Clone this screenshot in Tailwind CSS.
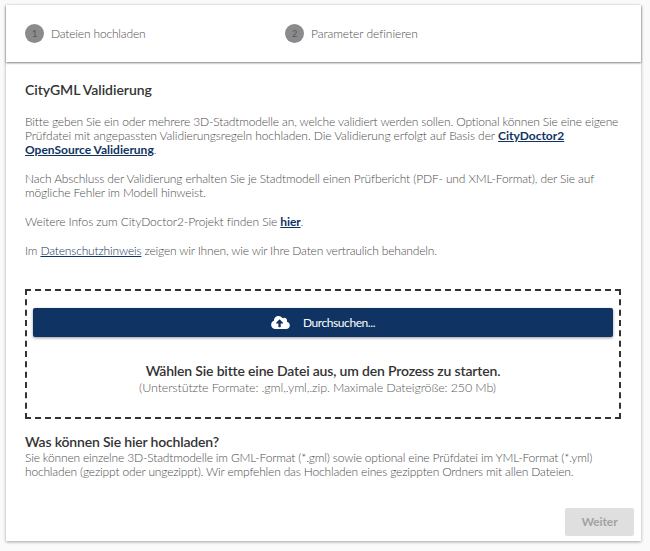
<!DOCTYPE html>
<html lang="de"><head><meta charset="utf-8"><script src="https://cdn.jsdelivr.net/npm/@tailwindcss/browser@4"></script></head>
<body class="w-[650px] h-[551px] overflow-hidden bg-[#fafafa] font-['Lato',sans-serif] font-light text-[12px] leading-[14px] text-[#4d4d4d]">
<div class="ml-[6px] mt-[5px] w-[635px] h-[536px] bg-white shadow-[0_1px_3px_rgba(0,0,0,0.35)] flex flex-col">
  <div class="h-[57px] shrink-0 flex items-center pl-[19px] shadow-[0_1px_2px_rgba(0,0,0,0.5)]">
    <div class="w-[260px] flex items-center gap-[7px]">
      <span class="w-[19px] h-[19px] rounded-full bg-[#8b8b8d] text-[#555] font-normal text-[9px] flex items-center justify-center">1</span>
      <span class="tracking-[-0.17px]">Dateien hochladen</span>
    </div>
    <div class="flex items-center gap-[7px]">
      <span class="w-[19px] h-[19px] rounded-full bg-[#8b8b8d] text-[#555] font-normal text-[9px] flex items-center justify-center">2</span>
      <span class="tracking-[-0.05px]">Parameter definieren</span>
    </div>
  </div>
  <div class="flex-1 flex flex-col pl-[19px] pr-[20px] pt-[20px]">
    <h1 class="text-[14px] leading-[16px] font-semibold text-[#333] tracking-[-0.05px]">CityGML Validierung</h1>
    <p class="mt-[17px] tracking-[-0.15px]">Bitte geben Sie ein oder mehrere 3D-Stadtmodelle an, welche validiert werden sollen. Optional können Sie eine eigene <span class="tracking-[-0.09px]">Prüfdatei mit angepassten Validierungsregeln hochladen. Die Validierung erfolgt auf Basis der</span> <a class="font-bold text-[#0f3362] underline tracking-normal">CityDoctor2 OpenSource Validierung</a>.</p>
    <p class="mt-[15px] tracking-[-0.13px]">Nach Abschluss der Validierung erhalten Sie je Stadtmodell einen Prüfbericht (PDF- und XML-Format), der Sie auf mögliche Fehler im Modell hinweist.</p>
    <p class="mt-[15px] tracking-[-0.1px]">Weitere Infos zum CityDoctor2-Projekt finden Sie <a class="font-bold text-[#0f3362] underline">hier</a>.</p>
    <p class="mt-[15px] tracking-[-0.17px]">Im <a class="font-light text-[#0f3362] underline">Datenschutzhinweis</a> zeigen wir Ihnen, wie wir Ihre Daten vertraulich behandeln.</p>
    <div class="mt-[31px] h-[130px] border-2 border-dashed border-[#333] px-[6px] pt-[17px] flex flex-col items-center">
      <button class="w-full h-[29px] bg-[#0f3362] rounded-[2px] shadow-[0_1px_3px_rgba(0,0,0,0.4)] text-white font-normal tracking-[-0.42px] flex items-center justify-center gap-[13px]">
        <svg width="19" height="15" viewBox="0 0 640 512"><path fill="#fff" d="M537.6 226.6c4.1-10.7 6.4-22.4 6.4-34.6 0-53-43-96-96-96-19.7 0-38.1 6-53.3 16.2C367 64.2 315.3 32 256 32c-88.4 0-160 71.6-160 160 0 2.7.1 5.4.2 8.1C40.2 219.800 0 273.200 0 336c0 79.500 64.500 144 144 144h368c70.700 0 128-57.300 128-128 0-61.900-44-113.600-102.400-125.400zM393.400 288H328v112c0 8.800-7.200 16-16 16h-48c-8.800 0-16-7.200-16-16V288h-65.400c-14.300 0-21.400-17.200-11.300-27.300l105.400-105.400c6.200-6.200 16.400-6.200 22.600 0l105.400 105.400c10.100 10.100 2.900 27.300-11.300 27.300z"/></svg>
        <span>Durchsuchen...</span>
      </button>
      <div class="mt-[26px] text-[14px] leading-[16px] font-semibold text-[#333] tracking-[-0.17px]">Wählen Sie bitte eine Datei aus, um den Prozess zu starten.</div>
      <div class="mt-[2px] pr-[11px] text-[#5a5a5a] text-[12.5px] tracking-[-0.14px]">(Unterstützte Formate: .gml,.yml,.zip. Maximale Dateigröße: 250 Mb)</div>
    </div>
    <h2 class="mt-[15px] text-[14px] leading-[16px] font-semibold text-[#333] tracking-[-0.17px]">Was können Sie hier hochladen?</h2>
    <p class="mt-[1px] tracking-[-0.17px]">Sie können einzelne 3D-Stadtmodelle im GML-Format (*.gml) sowie optional eine Prüfdatei im YML-Format (*.yml) hochladen (gezippt oder ungezippt). Wir empfehlen das Hochladen eines gezippten Ordners mit allen Dateien.</p>
  </div>
  <div class="flex justify-end pr-[7px] pb-[5px]">
    <button class="w-[69px] h-[28px] bg-[#dfdfdf] rounded-[2px] text-[#a3a3a3] font-bold tracking-[-0.1px]">Weiter</button>
  </div>
</div>
</body></html>
